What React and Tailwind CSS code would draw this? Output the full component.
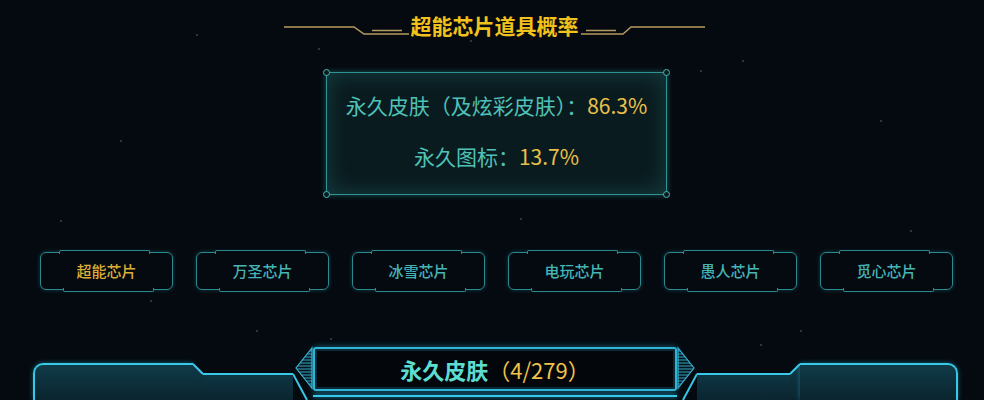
const chips = ["超能芯片", "万圣芯片", "冰雪芯片", "电玩芯片", "愚人芯片", "觅心芯片"];

const stars = [
  [196, 34], [318, 48], [742, 60], [120, 140], [880, 120], [60, 220],
  [910, 230], [256, 330], [330, 338], [410, 356], [760, 344], [800, 330],
  [520, 218], [700, 70], [470, 40], [150, 300],
];

// hatched arrow head on the tab sides
const Arrow = ({ right }) => {
  const ys = [6, 9, 12, 15, 18, 21, 24, 27, 30, 33, 36, 39];
  return (
    <svg width="20" height="55" viewBox="0 0 20 55" className="shrink-0">
      {right ? (
        <>
          <path d="M6 55 L20 29" stroke="#37c8e8" strokeWidth="2" fill="none" />
          <polygon points="1,3 1,43 17,23" fill="#06141c" stroke="#3ab4d4" strokeWidth="1.2" />
          {ys.map((y) => (
            <line key={y} x1="1" y1={y} x2={17 - (16 * Math.abs(y - 23)) / 20} y2={y} stroke="#3ab4d4" strokeWidth="0.9" />
          ))}
        </>
      ) : (
        <>
          <path d="M0 29 L14 55" stroke="#37c8e8" strokeWidth="2" fill="none" />
          <polygon points="19,3 19,43 3,23" fill="#06141c" stroke="#3ab4d4" strokeWidth="1.2" />
          {ys.map((y) => (
            <line key={y} x1={3 + (16 * Math.abs(y - 23)) / 20} y1={y} x2="19" y2={y} stroke="#3ab4d4" strokeWidth="0.9" />
          ))}
        </>
      )}
    </svg>
  );
};

const Step = ({ up }) => (
  <svg width="10" height="55" viewBox="0 0 10 55" className="shrink-0">
    <defs>
      <linearGradient id={up ? "stepU" : "stepD"} x1="0" y1="18" x2="0" y2="55" gradientUnits="userSpaceOnUse">
        <stop offset="0" stopColor="#103a48" />
        <stop offset="1" stopColor="#0a2530" />
      </linearGradient>
    </defs>
    <polygon points={up ? "0,29 10,19 10,55 0,55" : "0,19 10,29 10,55 0,55"} fill={`url(#${up ? "stepU" : "stepD"})`} />
    <path d={up ? "M0 29 L10 19" : "M0 19 L10 29"} stroke="#38c8e8" strokeWidth="2" fill="none" />
  </svg>
);

const Corner = ({ className }) => (
  <span className={`absolute size-[7px] rounded-full border border-[#4ab8b4] bg-[#0a1c20] ${className}`} />
);

export default function App() {
  return (
    <div className="relative w-[984px] h-[400px] overflow-hidden bg-[#050a10] font-['Noto_Sans_CJK_SC','Noto_Sans',sans-serif]">
      {/* stars */}
      {stars.map(([x, y], i) => (
        <span
          key={i}
          className="absolute size-[2px] rounded-full bg-[#5a7080] opacity-60"
          style={{ left: x, top: y }}
        />
      ))}

      {/* title */}
      <div className="relative flex h-[50px] items-center justify-center gap-[2px] pl-[4px]">
        <svg width="125" height="22" viewBox="0 0 125 22" className="mt-[2px]">
          <path d="M0 12 H70 L80 19 H125" stroke="#b59c5e" strokeWidth="1.5" fill="none" />
          <path d="M88 15.5 H118" stroke="#b59c5e" strokeWidth="1.5" fill="none" />
        </svg>
        <h1 className="text-[21px] font-bold leading-none text-[#f2c21c]">超能芯片道具概率</h1>
        <svg width="124" height="22" viewBox="0 0 124 22" className="mt-[2px]">
          <path d="M0 19 H42 L50 12 H124" stroke="#b59c5e" strokeWidth="1.5" fill="none" />
          <path d="M5 15.5 H35" stroke="#b59c5e" strokeWidth="1.5" fill="none" />
        </svg>
      </div>

      {/* probability box */}
      <div className="relative ml-[326px] mt-[22px] flex h-[123px] w-[341px] flex-col items-center gap-[23px] border border-[#2f9393] bg-[#0a1b1f] pt-[18px] text-[21px] leading-[28px] text-[#4fc2b8] shadow-[0_0_6px_rgba(45,170,170,0.45),inset_0_0_22px_rgba(50,160,160,0.28)]">
        <Corner className="-left-[4px] -top-[4px]" />
        <Corner className="-right-[4px] -top-[4px]" />
        <Corner className="-left-[4px] -bottom-[4px]" />
        <Corner className="-right-[4px] -bottom-[4px]" />
        <p>
          永久皮肤（及炫彩皮肤）：<span className="text-[#e8c04a]">86.3%</span>
        </p>
        <p>
          永久图标：<span className="text-[#e8c04a]">13.7%</span>
        </p>
      </div>

      {/* chip tabs */}
      <div className="relative mt-[57px] flex gap-[23px] pl-[40px]">
        {chips.map((c, i) => (
          <div
            key={c}
            className="relative flex h-[38px] w-[133px] items-center justify-center rounded-[6px] border border-[#2b8a90] shadow-[0_0_4px_rgba(40,170,180,0.35)]"
          >
            <span className="absolute -top-[3px] left-[18px] right-[22px] h-[4px] rounded-t-[2px] border-x border-t border-[#2b8a90] bg-[#050a10]" />
            <span className="absolute -bottom-[3px] left-[22px] right-[18px] h-[4px] rounded-b-[2px] border-x border-b border-[#2b8a90] bg-[#050a10]" />
            <span className={`text-[15px] font-medium ${i === 0 ? "text-[#dcae34]" : "text-[#45b4b4]"}`}>{c}</span>
          </div>
        ))}
      </div>

      {/* bottom panel head */}
      <div className="relative mt-[55px] flex h-[55px] items-start pl-[33px]">
        <div className="mt-[18px] h-[37px] w-[160px] shrink-0 rounded-tl-[10px] border-l-2 border-t-2 border-[#38c8e8] bg-linear-to-b from-[#103a48] to-[#0a2530] shadow-[0_0_5px_rgba(40,190,230,0.45)]" />
        <Step />
        <div className="mt-[28px] h-[27px] w-[90px] shrink-0 border-t-2 border-[#38c8e8] bg-linear-to-b from-[#0e3543] to-[#0a2530]" />
        <Arrow />
        <div className="flex h-[55px] w-[364px] shrink-0 flex-col pt-[2px]">
          <div className="flex h-[44px] items-center justify-center rounded-[3px] border-2 border-[#2fb4d4] bg-[#03070c] shadow-[0_0_6px_rgba(40,190,220,0.5),inset_0_0_0_2px_#0b2a38]">
            <span className="text-[22px] font-bold leading-none text-[#5ddcd0]">永久皮肤</span>
            <span className="text-[22px] leading-none text-[#f0c24a]">（4/279）</span>
          </div>
          <div className="mt-[4px] h-[2px] bg-[#38c8e8] shadow-[0_0_5px_#1fb8e0]" />
        </div>
        <Arrow right />
        <div className="mt-[28px] h-[27px] w-[93px] shrink-0 border-t-2 border-[#38c8e8] bg-linear-to-b from-[#0e3543] to-[#0a2530]" />
        <Step up />
        <div className="mt-[18px] h-[37px] w-[158px] shrink-0 rounded-tr-[10px] border-r-2 border-t-2 border-[#38c8e8] bg-linear-to-b from-[#103a48] to-[#0a2530] shadow-[0_0_5px_rgba(40,190,230,0.45)]" />
      </div>
    </div>
  );
}
